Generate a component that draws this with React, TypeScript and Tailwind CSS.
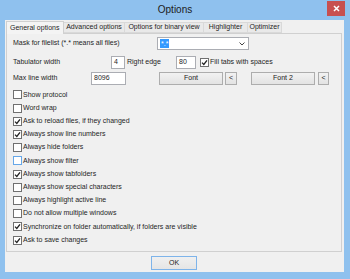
import React from 'react';

const font = { fontFamily: '"Liberation Sans", Arial, sans-serif' };

const tabs = [
  { label: 'General options', w: 'w-[58px]' },
  { label: 'Advanced options', w: 'w-[61px]' },
  { label: 'Options for binary view', w: 'w-[79px]' },
  { label: 'Highlighter', w: 'w-[44px]' },
  { label: 'Optimizer', w: 'w-[34px]' },
];

const checks = [
  { label: 'Show protocol', on: false },
  { label: 'Word wrap', on: false },
  { label: 'Ask to reload files, if they changed', on: true },
  { label: 'Always show line numbers', on: true },
  { label: 'Always hide folders', on: false },
  { label: 'Always show filter', on: false, focus: true },
  { label: 'Always show tabfolders', on: true },
  { label: 'Always show special characters', on: false },
  { label: 'Always highlight active line', on: false },
  { label: 'Do not allow multiple windows', on: false },
  { label: 'Synchronize on folder automatically, if folders are visible', on: true },
  { label: 'Ask to save changes', on: true },
];

const Box: React.FC<{ on: boolean; focus?: boolean }> = ({ on, focus }) => (
  <span
    className={`flex-shrink-0 w-[9px] h-[9px] border bg-white flex items-center justify-center ${
      focus ? 'border-[#66a7e8]' : 'border-[#707070]'
    }`}
  >
    {on && (
      <svg width="7" height="7" viewBox="0 0 7 7">
        <path d="M1 3.6 L2.8 5.4 L6 1.3" fill="none" stroke="#222" strokeWidth="1.3" />
      </svg>
    )}
  </span>
);

const Btn: React.FC<{ w: string; ml: string; children: React.ReactNode }> = ({ w, ml, children }) => (
  <div
    className={`${w} ${ml} h-[13px] border border-[#adadad] bg-gradient-to-b from-[#f2f2f2] to-[#e3e3e3] flex items-center justify-center text-[#222]`}
  >
    {children}
  </div>
);

export default function App() {
  return (
    <div className="w-[350px] h-[279px] bg-[#8fc1ee] flex flex-col text-[7px] text-[#1e1e1e]" style={font}>
      {/* title bar */}
      <div className="h-[20px] flex-shrink-0 relative flex items-center justify-center">
        <span className="text-[10px] text-[#202020] mt-[-1px]">Options</span>
        <div className="absolute right-[5px] top-[1px] w-[18px] h-[15px] bg-[#c75050] flex items-center justify-center">
          <svg width="7" height="7" viewBox="0 0 7 7">
            <path d="M1 1 L6 6 M6 1 L1 6" stroke="#fff" strokeWidth="1.5" />
          </svg>
        </div>
      </div>

      {/* client */}
      <div className="ml-[5px] mr-[6px] h-[252px] bg-[#f0f0f0] flex flex-col pl-[1px] pr-[2px]">
        {/* tabs */}
        <div className="h-[13px] flex items-end">
          {tabs.map((t, i) =>
            i === 0 ? (
              <div
                key={t.label}
                className={`${t.w} h-[13px] mb-[-1px] z-10 border border-b-0 border-[#d0d0d0] bg-[#f4f4f4] flex items-center pl-[3px] whitespace-nowrap`}
              >
                {t.label}
              </div>
            ) : (
              <div
                key={t.label}
                className={`${t.w} h-[11px] border border-l-0 border-[#d9d9d9] bg-[#e9e9e9] flex items-center justify-center whitespace-nowrap`}
              >
                {t.label}
              </div>
            )
          )}
        </div>

        {/* panel */}
        <div className="w-[336px] h-[219px] border border-[#d0d0d0] bg-[#f0f0f0] flex flex-col pl-[6px] pt-[3px]">
          <div className="h-[13px] flex items-center">
            <span className="w-[144px]">Mask for filelist (*.* means all files)</span>
            <div className="w-[92px] h-[13px] border border-[#abadb3] bg-white flex items-center pl-[2px] pr-[3px]">
              <span className="bg-[#3399ff] text-white px-[1px] leading-[9px]">*.*</span>
              <span className="flex-1" />
              <svg width="6" height="4" viewBox="0 0 6 4">
                <path d="M0.5 0.5 L3 3 L5.5 0.5" fill="none" stroke="#444" strokeWidth="1" />
              </svg>
            </div>
          </div>

          <div className="h-[13px] mt-[6px] flex items-center">
            <span className="w-[98px]">Tabulator width</span>
            <div className="w-[14px] h-[13px] border border-[#abadb3] bg-white flex items-center pl-[2px]">4</div>
            <span className="w-[49px] ml-[2px]">Right edge</span>
            <div className="w-[20px] h-[13px] border border-[#abadb3] bg-white flex items-center pl-[2px]">80</div>
            <span className="ml-[4px]">
              <Box on />
            </span>
            <span className="ml-[1px]">Fill tabs with spaces</span>
          </div>

          <div className="h-[13px] mt-[3px] flex items-center">
            <span className="w-[78px]">Max line width</span>
            <div className="w-[35px] h-[13px] border border-[#abadb3] bg-white flex items-center pl-[2px]">8096</div>
            <Btn w="w-[64px]" ml="ml-[33px]">Font</Btn>
            <Btn w="w-[12px]" ml="ml-[2px]">&lt;</Btn>
            <Btn w="w-[64px]" ml="ml-[14px]">Font 2</Btn>
            <Btn w="w-[11px]" ml="ml-[3px]">&lt;</Btn>
          </div>

          <div className="mt-[3.4px] flex flex-col">
            {checks.map((c) => (
              <div key={c.label} className="h-[13.2px] flex items-center gap-[1px] whitespace-nowrap">
                <Box on={c.on} focus={c.focus} />
                <span>{c.label}</span>
              </div>
            ))}
          </div>
        </div>

        {/* footer */}
        <div className="flex justify-center mt-[4px]">
          <div className="w-[46px] h-[14px] border border-[#7eb4ea] bg-gradient-to-b from-[#f0f0f0] to-[#e5e5e5] flex items-center justify-center text-[#222]">
            OK
          </div>
        </div>
      </div>
    </div>
  );
}
